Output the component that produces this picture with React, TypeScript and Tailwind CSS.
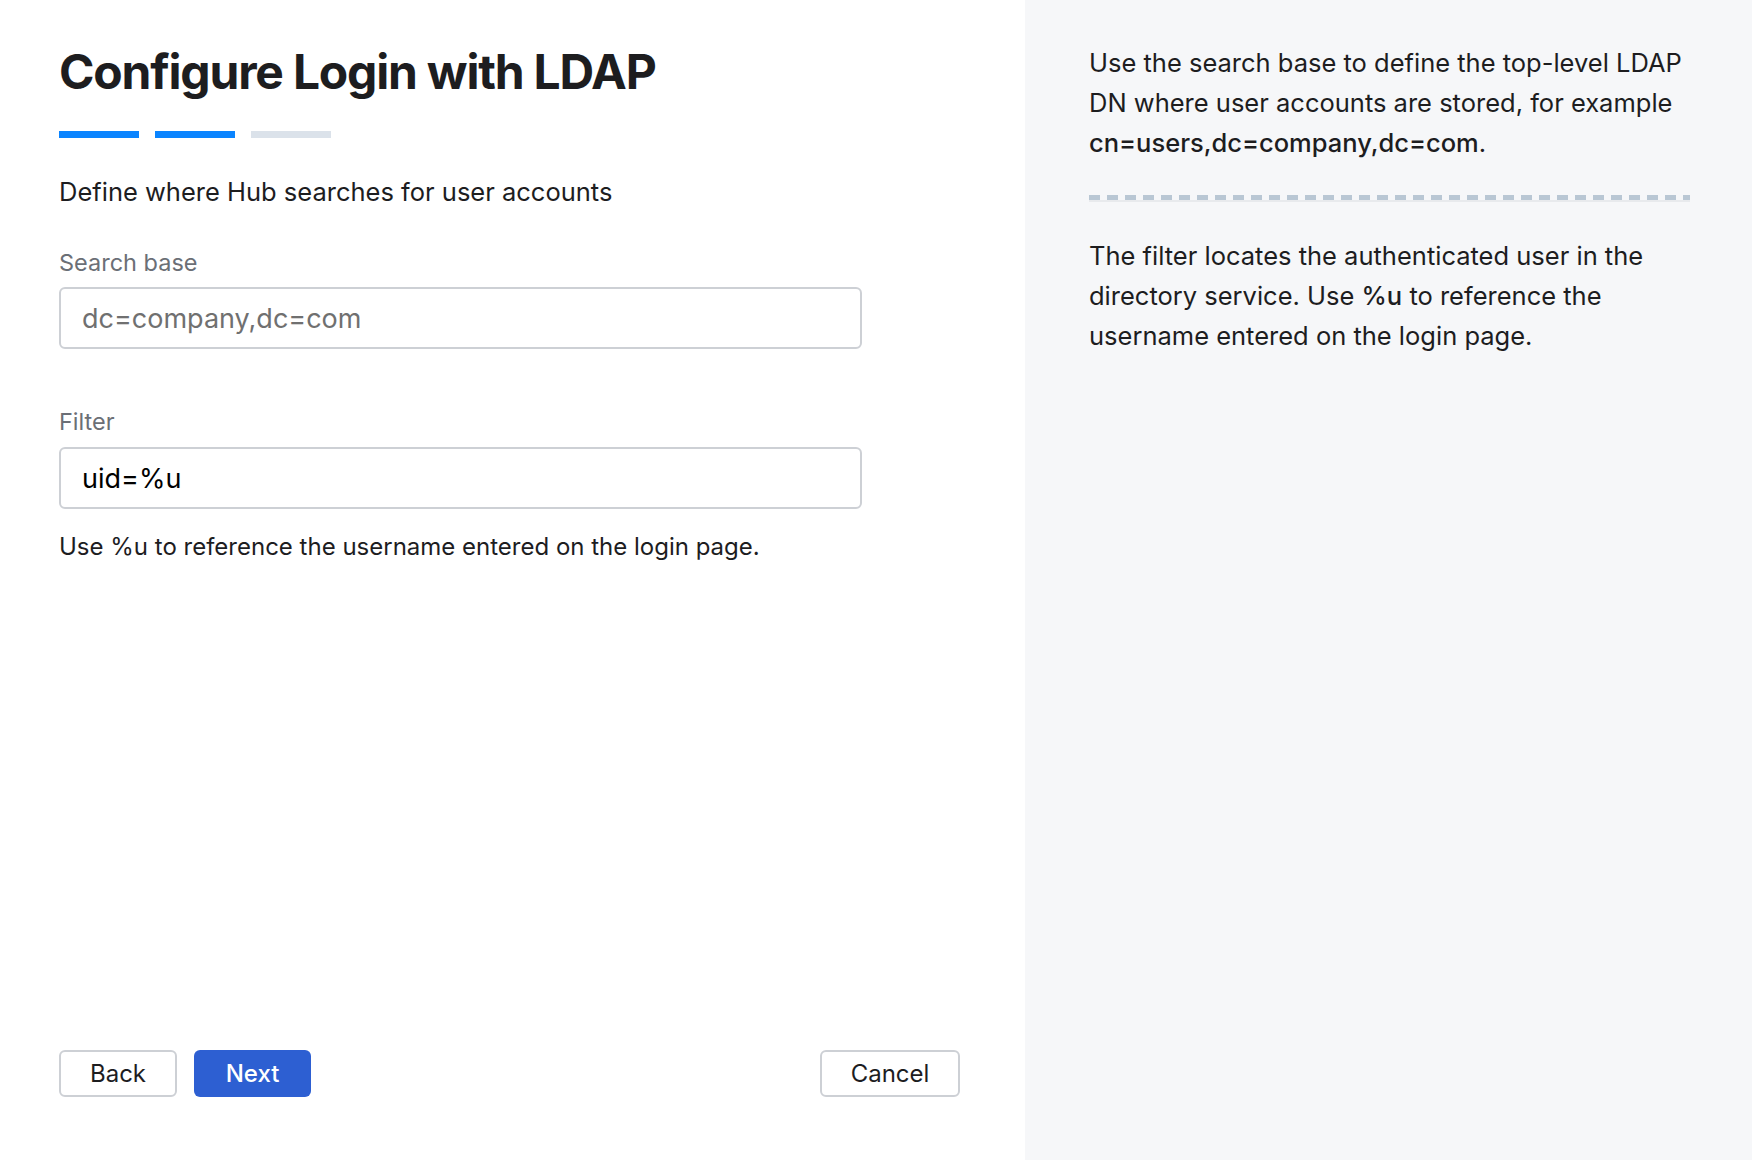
export default function App() {
  return (
    <div className="flex h-screen w-full bg-white font-['Inter',sans-serif] text-[#1d1d1f]">
      <main className="flex w-[1025px] shrink-0 flex-col pb-[63px] pl-[59px] pr-[65px] pt-[44px]">
        <h1 className="text-[48px] font-bold leading-[56px] tracking-[-0.025em] text-[#1d1d1f]">
          Configure Login with LDAP
        </h1>

        <div className="mt-[31px] flex gap-[16px]">
          <span className="h-[7px] w-[80px] bg-[#0a84ff]" />
          <span className="h-[7px] w-[80px] bg-[#0a84ff]" />
          <span className="h-[7px] w-[80px] bg-[#dbe2ea]" />
        </div>

        <p className="mt-[38px] text-[25.5px] leading-[32px]">Define where Hub searches for user accounts</p>

        <label className="mt-[40px] block text-[23.5px] leading-[30px] text-[#6b6f76]">Search base</label>
        <input
          placeholder="dc=company,dc=com"
          className="mt-[9px] h-[62px] w-[803px] rounded-[6px] border-2 border-[#cdd0d5] px-[21px] text-[27px] text-[#1d1d1f] outline-none placeholder:text-[#707070]"
        />

        <label className="mt-[58px] block text-[23.5px] leading-[30px] text-[#6b6f76]">Filter</label>
        <input
          defaultValue="uid=%u"
          className="mt-[10px] h-[62px] w-[803px] rounded-[6px] border-2 border-[#cdd0d5] px-[21px] text-[27px] text-black outline-none"
        />
        <p className="mt-[22px] text-[24px] leading-[32px]">Use %u to reference the username entered on the login page.</p>

        <div className="mt-auto flex items-center">
          <button className="h-[47px] w-[118px] rounded-[6px] border-2 border-[#cdd0d5] bg-white text-[24px] text-[#1d1d1f]">
            Back
          </button>
          <button className="ml-[17px] h-[47px] w-[117px] rounded-[6px] bg-[#2d5fd2] text-[24px] font-medium text-white">
            Next
          </button>
          <button className="ml-auto h-[47px] w-[140px] rounded-[6px] border-2 border-[#cdd0d5] bg-white text-[24px] text-[#1d1d1f]">
            Cancel
          </button>
        </div>
      </main>

      <aside className="flex-1 bg-[#f6f7f9] pl-[64px] pr-[62px] pt-[43px]">
        <p className="text-[25.5px] leading-[40px] text-[#1d1d1f]">
          Use the search base to define the top-level LDAP DN where user accounts are stored, for example{" "}
          <span className="font-medium">cn=users,dc=company,dc=com</span>.
        </p>

        <div className="mt-[32px] border-b-2 border-[#e8eaed]">
          <div className="h-[5px] bg-[repeating-linear-gradient(90deg,#b9c7d4_0_11px,transparent_11px_18px)]" />
        </div>

        <p className="mt-[34px] text-[25.5px] leading-[40px] text-[#1d1d1f]">
          The filter locates the authenticated user in the directory service. Use{" "}
          <span className="font-medium">%u</span> to reference the username entered on the login page.
        </p>
      </aside>
    </div>
  );
}
